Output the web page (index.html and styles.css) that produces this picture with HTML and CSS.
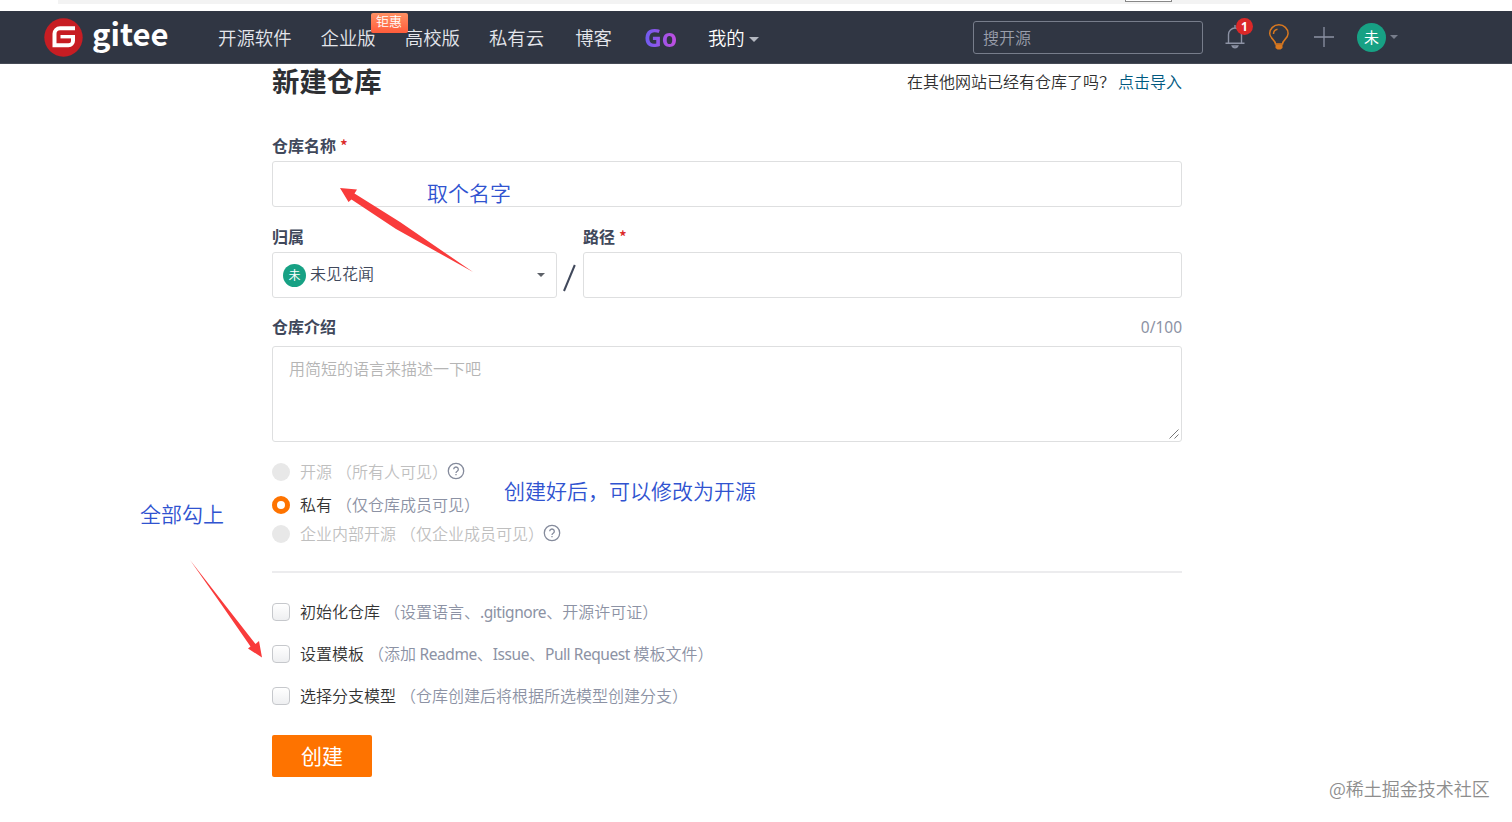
FILE: index.html
```html
<!DOCTYPE html>
<html lang="zh-CN">
<head>
<meta charset="utf-8">
<title>新建仓库 - Gitee</title>
<link rel="stylesheet" href="styles.css">
</head>
<body>
<div class="browser-strip"><span class="strip-bar"></span><span class="strip-tab"></span></div>
<header class="topbar">
  <a class="logo">
    <svg class="logo-mark" viewBox="0 0 39 39"><circle cx="19.5" cy="19.5" r="19.2" fill="#c71d23"/><path d="M31 10.200H16a5.500 5.500 0 0 0-5.500 5.500V27.200H24.500a4.500 4.500 0 0 0 4.500-4.500V17" fill="none" stroke="#fff" stroke-width="4"/><path d="M16.500 18.700H29" stroke="#fff" stroke-width="3.400"/></svg>
    <span class="logo-text">gitee</span>
  </a>
  <nav class="nav">
    <a>开源软件</a>
    <a class="has-tag">企业版<span class="tag">钜惠</span></a>
    <a>高校版</a>
    <a>私有云</a>
    <a class="blog">博客</a>
    <a class="go">Go</a>
    <a class="mine">我的<i class="caret"></i></a>
  </nav>
  <div class="search">搜开源</div>
  <div class="tools">
    <span class="bell">
      <svg width="20" height="24" viewBox="0 0 20 24" fill="none" stroke="#8c92a4" stroke-width="1.400"><path d="M10 0v3M0.500 18.300h19M3.500 18V9.500a6.500 6.500 0 0 1 13 0V18M7.200 21c1 2.400 4.600 2.400 5.600 0z"/></svg>
      <b class="badge">1</b>
    </span>
    <svg class="bulb" width="22" height="26" viewBox="0 0 22 26" fill="none" stroke="#d9781f" stroke-width="1.500"><path d="M7.500 20c0-4-5.800-5.500-5.800-10.500a9.200 8.700 0 0 1 18.400 0C20.100 14.500 14.500 16 14.500 20zM5.500 10c0-2.500 1.500-4.200 4-4.700"/><path d="M7.500 20.500h7v3.500l-2 1.500h-3l-2-1.500z" fill="#d9781f" stroke="none"/></svg>
    <svg class="plus" width="20" height="20" viewBox="0 0 20 20" stroke="#8c92a4" stroke-width="1.300"><path d="M10 0v20M0 10h20"/></svg>
    <span class="avatar">未</span><i class="caret small"></i>
  </div>
</header>
<main class="page">
  <div class="heading">
    <h1>新建仓库</h1>
    <p>在其他网站已经有仓库了吗？<a>点击导入</a></p>
  </div>
  <label class="label">仓库名称<em>*</em></label>
  <div class="field name"></div>
  <div class="row">
    <div class="owner">
      <label class="label">归属</label>
      <div class="field select"><span class="avatar mini">未</span><span class="owner-name">未见花闻</span><i class="caret dark"></i></div>
    </div>
    <svg class="slash" width="26" height="46" viewBox="0 0 26 46"><path d="M7 39L17.800 13" stroke="#40485b" stroke-width="2"/></svg>
    <div class="path">
      <label class="label">路径<em>*</em></label>
      <div class="field"></div>
    </div>
  </div>
  <div class="intro"><label class="label">仓库介绍</label><span class="count">0/100</span></div>
  <div class="field area">用简短的语言来描述一下吧
    <svg class="grip" width="10" height="10" viewBox="0 0 10 10" stroke="#777" stroke-width="1"><path d="M0.500 9.500l9-9M5.500 9.500l4-4"/></svg>
  </div>
  <div class="radios">
    <div class="option off"><i class="radio"></i><span>开源</span><small>（所有人可见）</small><svg class="help" viewBox="0 0 18 18"><circle cx="9" cy="9" r="7.700"/><path d="M6.700 7.300a2.300 2.300 0 1 1 3.500 2c-.8.500-1.200.8-1.200 1.600M9 12v1.300"/></svg></div>
    <div class="option on"><i class="radio"></i><span>私有</span><small>（仅仓库成员可见）</small></div>
    <div class="option off last"><i class="radio"></i><span>企业内部开源</span><small>（仅企业成员可见）</small><svg class="help" viewBox="0 0 18 18"><circle cx="9" cy="9" r="7.700"/><path d="M6.700 7.300a2.300 2.300 0 1 1 3.500 2c-.8.500-1.200.8-1.200 1.600M9 12v1.300"/></svg></div>
  </div>
  <div class="checks">
    <div class="option"><i class="box"></i><span>初始化仓库</span><small>（设置语言、<span class="latin">.gitignore</span>、开源许可证）</small></div>
    <div class="option"><i class="box"></i><span>设置模板</span><small>（添加<span class="latin"> Readme</span>、<span class="latin">Issue</span>、<span class="latin">Pull Request </span>模板文件）</small></div>
    <div class="option"><i class="box"></i><span>选择分支模型</span><small>（仓库创建后将根据所选模型创建分支）</small></div>
  </div>
  <button class="submit">创建</button>
</main>
<div class="notes">
  <svg width="1512" height="822" viewBox="0 0 1512 822" fill="#f93b3b"><path d="M340 188L357 189.500L354.500 193.500L400 222L473 272L396 229L351.500 199.500L348.500 202z"/><path d="M190 560L225 605L255.500 644L259 641L262 657.500L248 648.500L250.500 646.500L221 604z"/></svg>
  <span class="note n1">取个名字</span>
  <span class="note n2">创建好后，可以修改为开源</span>
  <span class="note n3">全部勾上</span>
  <span class="watermark">@稀土掘金技术社区</span>
</div>
</body>
</html>
```

FILE: styles.css
```css
* { box-sizing: border-box; }
body {
  margin: 0;
  position: relative;
  width: 1512px;
  height: 822px;
  overflow: hidden;
  background: #fff;
  color: #333;
  font: 350 16px/24px "Noto Sans CJK SC", sans-serif;
}
i, em { font-style: normal; }
.browser-strip { height: 11px; display: flex; align-items: flex-start; }
.strip-bar { width: 1192px; margin-left: 58px; height: 4px; background: #f3f3f3; }
.strip-tab { width: 47px; height: 2px; margin-left: -125px; background: #fff; border: 1px solid #888; border-top: 0; }
.topbar {
  height: 53px;
  display: flex;
  align-items: center;
  background: #303643;
  border-bottom: 1px solid #454a55;
  padding-left: 44px;
  color: #e4e6ec;
}
.logo { display: flex; align-items: center; width: 174px; }
.logo-mark { width: 39px; height: 39px; }
.logo-text { font: 700 31px/40px "Noto Sans CJK SC", sans-serif; color: #fff; margin: -9px 0 0 9px; }
.nav { display: flex; gap: 29px; font-size: 18.4px; width: 755px; line-height: 28px; white-space: nowrap; }
.has-tag { position: relative; }
.tag {
  position: absolute; left: 50px; top: -10px;
  width: 37px; height: 20px;
  border-radius: 2px;
  background: linear-gradient(#ff9063, #ff5c3b);
  color: #fff; font-size: 13px; line-height: 15px; text-align: center;
}
.blog { margin-left: 2px; }
.go {
  margin-left: 3px; width: 35px;
  font: 700 24.700px/29px "Noto Sans", sans-serif;
  background: linear-gradient(90deg, #6b5cf0, #c84ddf);
  -webkit-background-clip: text; background-clip: text; color: transparent;
}
.mine { display: flex; align-items: center; gap: 4px; color: #fff; }
.caret { display: inline-block; border: 5px solid transparent; border-top-color: #b4b8c1; border-bottom: 0; margin-top: 4px; }
.search {
  width: 230px; height: 33px;
  border: 1px solid #777d8b; border-radius: 3px;
  padding: 3px 9px; color: #9a9fac;
}
.tools { display: flex; align-items: center; margin-left: 22px; }
.bell { position: relative; display: flex; width: 20px; }
.badge {
  position: absolute; left: 11px; top: -7px; width: 17px; height: 17px;
  border-radius: 50%; background: #db2828; color: #fff;
  font: 700 12px/17px "Noto Sans", sans-serif; text-align: center;
}
.bulb { margin-left: 23px; }
.plus { margin-left: 24px; }
.avatar {
  width: 29px; height: 29px; margin-left: 23px; border-radius: 50%;
  background: #17a184; color: #fff; font-size: 15px; font-weight: 400; line-height: 28px; text-align: center;
}
.small { border-width: 4.500px; border-bottom: 0; border-top-color: #777d8b; margin: 0 0 0 4px; }
.page { width: 910px; margin-left: 272px; }
.heading { display: flex; justify-content: space-between; height: 70px; }
h1 { margin: -2px 0 0; font-size: 27.400px; line-height: 36px; font-weight: 700; color: #2d2f33; }
.heading p { margin: 5px 0 0; color: #303030; }
.heading a { color: #005980; margin-left: 3px; }
.label { display: block; font-weight: 700; color: #40485b; height: 27px; line-height: 23px; }
.label em { color: #db2828; margin-left: 4px; font-weight: 500; }
.field { height: 46px; border: 1px solid #dedfe0; border-radius: 3px; background: #fff; }
.row { display: flex; align-items: flex-end; margin-top: 18px; }
.owner { width: 285px; }
.path { flex: 1; }
.select { display: flex; align-items: center; padding: 0 10px; }
.mini { width: 23px; height: 23px; margin: 0 4px 0 0; font-size: 12px; line-height: 22px; }
.owner-name { color: #40485b; flex: 1; margin-top: -5px; }
.dark { border-width: 4.500px; border-bottom: 0; border-top-color: #5d6168; margin: 0 1px 0 0; }
.intro { display: flex; justify-content: space-between; margin-top: 17px; height: 31px; }
.count { color: #8c92a4; font: 400 15.500px/24px "Noto Sans", sans-serif; }
.area { position: relative; height: 96px; padding: 9px 16px; color: #b5b5b5; }
.grip { position: absolute; right: 2px; bottom: 2px; }
.radios { height: 131px; padding-top: 17px; border-bottom: 2px solid #ececee; }
.option { display: flex; align-items: center; height: 24px; color: #333; white-space: nowrap; }
.option small { font-size: 16px; color: #8c92a4; margin-left: 4px; }
.option.off, .option.off small { color: #bfbfbf; }
.option.on { margin-top: 9px; }
.option.last { margin-top: 5px; }
.radio { width: 18px; height: 18px; margin: 2px 10px 0 0; border-radius: 50%; background: #e8e8e8; }
.on .radio { background: #fff; border: 5.500px solid #fe7300; }
.help { width: 18px; height: 18px; margin: 0 0 0 -1px; fill: none; stroke: #858b9c; stroke-width: 1.300; }
.checks { display: grid; gap: 18px; padding-top: 26px; }
.box { width: 18px; height: 18px; margin: 1px 10px 0 0; border: 1px solid #c6c8cc; border-radius: 4px; background: linear-gradient(#fff, #eeeff1); }
.latin { font: 400 15.500px/20px "Noto Sans", sans-serif; letter-spacing: -0.450px; white-space: pre; }
.submit {
  display: block; width: 100px; height: 42px; margin-top: 28px; padding: 0 0 2px;
  border: 0; border-radius: 2px; background: #fe7300; color: #fff;
  font: 400 21px/38px "Noto Sans CJK SC", sans-serif;
}
.notes { position: absolute; inset: 0; pointer-events: none; }
.notes svg { display: block; }
.note { position: absolute; font-size: 21px; line-height: 30px; color: #3053d0; white-space: nowrap; }
.n1 { left: 427px; top: 177px; }
.n2 { left: 504px; top: 475px; }
.n3 { left: 140px; top: 498px; }
.watermark { position: absolute; left: 1329px; top: 776px; font-size: 18px; color: #8d8d8d; white-space: nowrap; }
```
